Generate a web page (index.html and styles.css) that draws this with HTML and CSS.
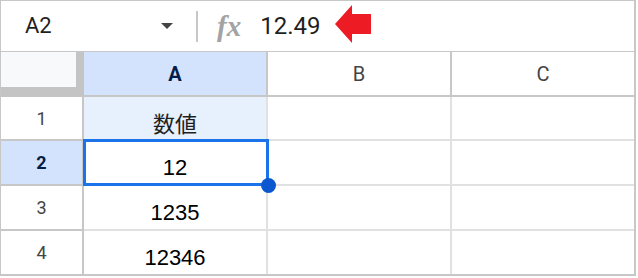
FILE: index.html
```html
<!DOCTYPE html>
<html lang="ja">

<head>
    <meta charset="UTF-8">
    <title>数値シート</title>
    <link rel="stylesheet" href="styles.css">
</head>

<body>
    <div class="sheet">
        <!-- 數式列 -->
        <div class="formula-bar">
            <div class="name-box">
                <span class="cell-ref">A2</span>
                <span class="caret"></span>
            </div>
            <span class="divider"></span>
            <span class="fx">fx</span>
            <span class="formula-value">12.49</span>
            <svg class="arrow" width="37" height="39" viewBox="0 0 37 39">
                <polygon points="0,19 17,0 17,9 36,9 36,29 17,29 17,38" fill="#ed1c24" />
            </svg>
        </div>

        <!-- 表格 -->
        <div class="grid">
            <div class="corner"></div>
            <div class="col-head active">A</div>
            <div class="col-head">B</div>
            <div class="col-head last">C</div>

            <div class="row-head">1</div>
            <div class="cell in-col">数値</div>
            <div class="cell"></div>
            <div class="cell last"></div>

            <div class="row-head active">2</div>
            <div class="cell selected">12<span class="handle"></span></div>
            <div class="cell"></div>
            <div class="cell last"></div>

            <div class="row-head">3</div>
            <div class="cell">1235</div>
            <div class="cell"></div>
            <div class="cell last"></div>

            <div class="row-head bottom">4</div>
            <div class="cell bottom">12346</div>
            <div class="cell bottom"></div>
            <div class="cell bottom last"></div>
        </div>
    </div>
</body>

</html>
```

FILE: styles.css
```css
body,
html {
    margin: 0;
    padding: 0;
    background: #fff;
}

/* 外框 */
.sheet {
    width: 636px;
    height: 276px;
    box-sizing: border-box;
    border-style: solid;
    border-color: #c7c7c7;
    border-width: 1px 2px 2px 1px;
    font-family: Roboto, "Liberation Sans", sans-serif;
    color: #1f1f1f;
}

/* 數式列 */
.formula-bar {
    height: 51px;
    box-sizing: border-box;
    border-bottom: 1px solid #c7c7c7;
    display: flex;
    align-items: center;
}

.name-box {
    width: 172px;
    box-sizing: border-box;
    padding-left: 24px;
    display: flex;
    align-items: center;
    justify-content: space-between;
}

.cell-ref {
    font-size: 22px;
    line-height: 26px;
}

.caret {
    width: 0;
    height: 0;
    border-left: 6.5px solid transparent;
    border-right: 6.5px solid transparent;
    border-top: 6px solid #444;
}

.divider {
    width: 2px;
    height: 31px;
    margin-left: 23px;
    background: #c7c7c7;
}

.fx {
    margin-left: 19px;
    font-family: "Liberation Serif", serif;
    font-style: italic;
    font-weight: bold;
    font-size: 29px;
    line-height: 26px;
    color: #a3a3a3;
    letter-spacing: 0;
}

.formula-value {
    margin-left: 19px;
    font-size: 24px;
    line-height: 26px;
}

.arrow {
    margin-left: 15px;
    margin-top: -4px;
}

/* 格線 */
.grid {
    display: grid;
    grid-template-columns: 83px 184px 184px 182px;
    grid-template-rows: 45px 44px 45px 45px 43px;
}

.corner {
    background: #f8f9fa;
    border-right: 8px solid #c4c4c4;
    border-bottom: 10px solid #c4c4c4;
}

.col-head,
.row-head {
    display: flex;
    align-items: center;
    justify-content: center;
    border-right: 2px solid #c7c7c7;
    border-bottom: 2px solid #c7c7c7;
    color: #444;
}

.col-head {
    font-size: 20px;
}

.row-head {
    font-size: 18px;
}

.col-head.last {
    border-right: none;
}

.row-head.bottom {
    border-bottom: none;
}

.col-head.active,
.row-head.active {
    background: #d3e3fd;
    color: #041e49;
    font-weight: bold;
}

.cell {
    position: relative;
    display: flex;
    align-items: flex-end;
    justify-content: center;
    padding-bottom: 3px;
    border-right: 2px solid #e1e1e1;
    border-bottom: 2px solid #e1e1e1;
    font-family: "Liberation Sans", "Noto Sans CJK JP", sans-serif;
    font-size: 22px;
    line-height: 27px;
    color: #000;
}

.cell.last {
    border-right: none;
}

.cell.bottom {
    border-bottom: none;
}

.cell.in-col {
    background: #e7f0fd;
    font-family: "Noto Sans CJK JP", sans-serif;
    font-size: 22px;
    color: #1f1f1f;
}

/* 選取框 */
.cell.selected::after {
    content: "";
    position: absolute;
    top: -2px;
    left: -1px;
    right: -3px;
    bottom: -2px;
    border: 3px solid #1a73e8;
}

.handle {
    position: absolute;
    right: -10px;
    bottom: -9px;
    width: 15px;
    height: 15px;
    border-radius: 50%;
    background: #0b57d0;
    z-index: 1;
}
```
